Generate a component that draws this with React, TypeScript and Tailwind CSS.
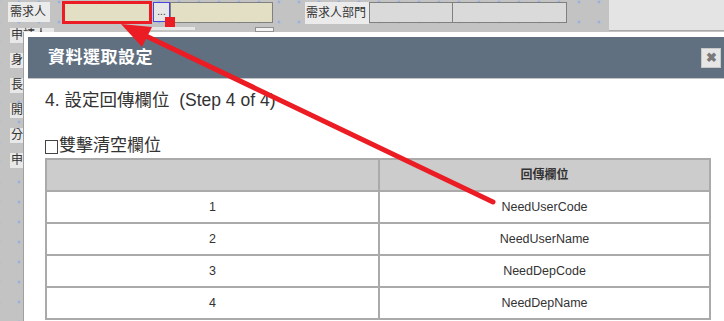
import React from 'react';

const ROWS = [
  { n: '1', field: 'NeedUserCode' },
  { n: '2', field: 'NeedUserName' },
  { n: '3', field: 'NeedDepCode' },
  { n: '4', field: 'NeedDepName' },
];

const SIDE_LABELS = ['申請人', '身份別', '長官', '開始日', '分機', '申請日'];

const GridBackdrop = () => (
  <svg className="absolute inset-0 pointer-events-none" width="724" height="321">
    <defs>
      <pattern id="plus" width="20" height="20" patternUnits="userSpaceOnUse" x="-11" y="-8">
        <path d="M10 8.5v3M8.5 10h3" stroke="#8eaae6" strokeWidth="1" />
      </pattern>
    </defs>
    <rect width="724" height="321" fill="url(#plus)" />
  </svg>
);

const Annotation = () => (
  <svg className="absolute inset-0 pointer-events-none" width="724" height="321">
    <rect x="165" y="17" width="10" height="10" fill="#ec1c24" />
    <line x1="146" y1="36" x2="493" y2="202" stroke="#ec1c24" strokeWidth="5" strokeLinecap="round" />
    <polygon points="121,24 152,27 142,47" fill="#ec1c24" />
  </svg>
);

export default function App() {
  return (
    <div className="relative w-[724px] h-[321px] overflow-hidden bg-[#c3c3c3] text-[#333] font-['Liberation_Sans','Noto_Sans_CJK_TC',sans-serif]">
      <GridBackdrop />

      {/* form behind the dialog */}
      <div className="relative flex flex-col">
        <div className="flex items-start h-[27px]">
          <div className="ml-[8px] mt-[2px] w-[42px] h-[20px] bg-[#ebebeb] pl-[2px] text-[12px] leading-[20px]">需求人</div>
          <div className="ml-[12px] mt-[1px] w-[90px] h-[23px] border-[3px] border-[#ec1c24] bg-[#e3dfc4]" />
          <div className="ml-[1px] mt-[2px] w-[17px] h-[20px] border border-[#4646dc] bg-[#e6e6e6] flex items-end justify-center pb-[4px] text-[10px] leading-none">...</div>
          <div className="mt-[2px] w-[103px] h-[21px] border border-[#808080] bg-[#e3dfc4]" />
          <div className="ml-[32px] mt-[2px] w-[64px] h-[22px] bg-[#ebebeb] pl-[1px] text-[12px] leading-[22px]">需求人部門</div>
          <div className="mt-[2px] flex h-[21px] border border-[#808080] bg-[#dadada]">
            <div className="w-[83px] border-r border-[#808080]" />
            <div className="w-[113px]" />
          </div>
          <div className="ml-[42px] self-start w-[115px] h-[31px] bg-[#e4e4e4] border-b border-[#a8a8a8]" />
        </div>

        <div className="flex">
          <div className="flex flex-col gap-[10px] pt-[1px]">
            {SIDE_LABELS.map((l) => (
              <div key={l} className="ml-[10px] w-[44px] h-[15px] bg-[#e8e8e8] pl-[1px] text-[12px] leading-[15px]">{l}</div>
            ))}
          </div>
          <div className="ml-[96px] w-[45px] h-[3px] bg-[#e6e6e6]" />
          <div className="ml-[60px] w-[19px] h-[5px] border border-[#909090] bg-[#f2f2f2]" />
        </div>
      </div>

      {/* dialog */}
      <div className="absolute left-[23px] top-[32px] w-[705px] h-[300px] bg-white border-l border-[#a0a0a0] pl-[4px] pt-[5px]">
        <div className="flex items-center justify-between h-[42px] bg-[#607080] border-b border-[#c4c4c4] pl-[20px] pr-[7px]">
          <span className="text-white font-bold text-[17px] tracking-[0.5px]">資料選取設定</span>
          <button className="w-[20px] h-[20px] bg-[#e6e6e6] border border-[#c8c8c8] text-[#7a7a7a] text-[13px] font-bold leading-none flex items-center justify-center">✖</button>
        </div>

        <div className="pl-[17px]">
          <div className="mt-[10px] h-[22px] text-[17.5px] leading-[22px] whitespace-pre">4. 設定回傳欄位  (Step 4 of 4)</div>
          <div className="mt-[24px] h-[22px] flex items-center text-[17px] leading-[22px]">
            <span className="inline-block w-[13px] h-[14px] border border-[#444] bg-white mr-[1px] mt-[1px]" />
            雙擊清空欄位
          </div>
          <div className="mt-[1px] w-[666px] grid grid-cols-[333px_331px] border-l-2 border-t-2 border-[#aaaaaa]">
            <div className="h-[32px] bg-[#cccccc] border-r-2 border-b-2 border-[#aaaaaa]" />
            <div className="h-[32px] bg-[#cccccc] border-r-2 border-b-2 border-[#aaaaaa] flex items-center justify-center text-[12px] font-bold">回傳欄位</div>
            {ROWS.map((r) => (
              <React.Fragment key={r.n}>
                <div className="h-[32px] border-r-2 border-b-2 border-[#aaaaaa] flex items-center justify-center text-[12.5px]">{r.n}</div>
                <div className="h-[32px] border-r-2 border-b-2 border-[#aaaaaa] flex items-center justify-center text-[12.5px]">{r.field}</div>
              </React.Fragment>
            ))}
          </div>
        </div>
      </div>

      <Annotation />
    </div>
  );
}
